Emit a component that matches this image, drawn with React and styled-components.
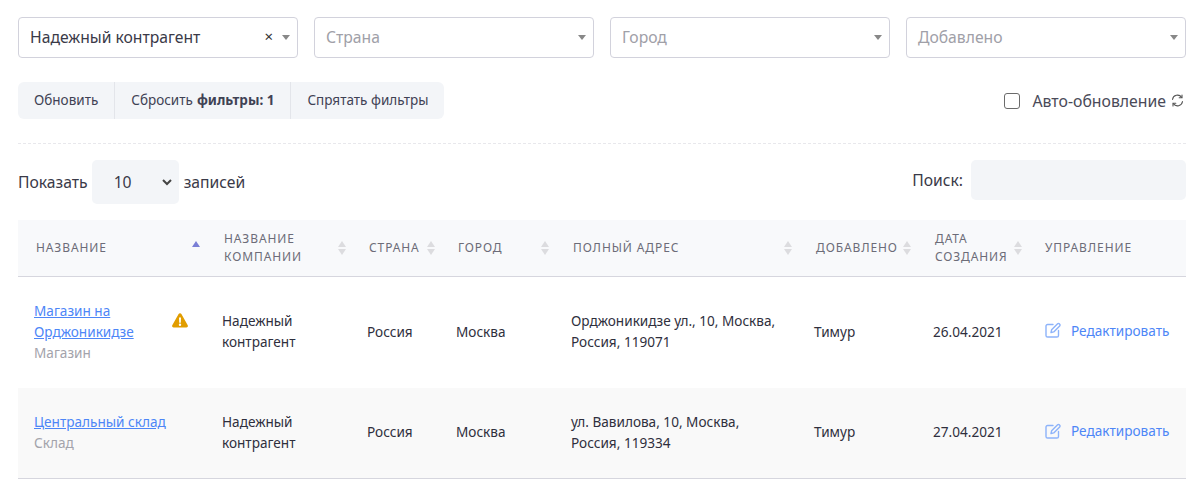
import React from 'react';
import styled, { createGlobalStyle } from 'styled-components';

const Global = createGlobalStyle`
  html, body { margin: 0; padding: 0; background: #fff; }
  body { font-family: "Noto Sans", "Open Sans", sans-serif; color: #2b2b3a; }
`;

const Page = styled.div`
  width: 1199px;
  height: 492px;
  overflow: hidden;
  box-sizing: border-box;
  padding: 17px 13px 0 18px;
`;

const Filters = styled.div`
  display: grid;
  grid-template-columns: repeat(4, 280px);
  column-gap: 16px;
`;

const Select = styled.div`
  height: 41px;
  box-sizing: border-box;
  border: 1px solid #d2d2dc;
  border-radius: 4px;
  display: flex;
  align-items: center;
  padding: 0 7px 2px 11px;
  font-size: 15.7px;
  color: ${p => (p.$filled ? '#3a3a48' : '#a0a0a8')};
`;

const SelectText = styled.span`
  flex: 1;
`;

const Clear = styled.span`
  font-size: 15px;
  font-weight: 400;
  color: #333;
  margin-right: 9px;
  line-height: 1;
`;

const Caret = styled.span`
  width: 0;
  height: 0;
  margin-top: 2px;
  border-left: 4px solid transparent;
  border-right: 4px solid transparent;
  border-top: 5px solid #888;
`;

const ToolRow = styled.div`
  display: flex;
  justify-content: space-between;
  align-items: center;
  margin-top: 24px;
  padding-bottom: 24px;
  border-bottom: 1px dashed #e8e8ec;
`;

const BtnGroup = styled.div`
  display: flex;
  height: 37px;
  background: #f3f5f8;
  border-radius: 6px;
`;

const Btn = styled.div`
  display: flex;
  align-items: center;
  padding: 0 16px 2px;
  font-size: 13.5px;
  color: #3f4254;
  & + & { border-left: 1px solid #e3e5ea; }
  b { font-weight: 700; margin-left: 4px; }
`;

const Auto = styled.label`
  display: flex;
  align-items: center;
  font-size: 15.8px;
  color: #4a4a58;
`;

const Check = styled.span`
  width: 14px;
  height: 14px;
  border: 1px solid #6b6b6b;
  border-radius: 3px;
  margin-right: 13px;
`;

const AutoIcon = styled.svg`
  width: 13px;
  height: 13px;
  margin-left: 5px;
  margin-right: 2px;
`;

const ControlRow = styled.div`
  display: flex;
  justify-content: space-between;
  align-items: flex-start;
  margin-top: 16px;
  height: 60px;
  font-size: 15.7px;
  color: #3a3a48;
`;

const Length = styled.div`
  display: flex;
  align-items: center;
  height: 44px;
`;

const LengthBox = styled.div`
  width: 87px;
  height: 44px;
  margin: 0 5px 0 4px;
  background: #f3f5f8;
  border-radius: 5px;
  box-sizing: border-box;
  padding: 0 7px 0 22px;
  display: flex;
  justify-content: space-between;
  align-items: center;
`;

const Search = styled.div`
  display: flex;
  align-items: center;
  height: 40px;
`;

const SearchBox = styled.div`
  width: 215px;
  height: 40px;
  margin-left: 8px;
  background: #f3f5f8;
  border-radius: 5px;
`;

const Table = styled.table`
  width: 1168px;
  table-layout: fixed;
  border-collapse: collapse;
`;

const Th = styled.th`
  height: 56px;
  box-sizing: border-box;
  background: #f8f9fb;
  border-bottom: 1px solid #d6d6de;
  padding: 0 ${p => (p.$last ? 16 : 18)}px;
  position: relative;
  text-align: left;
  font-size: 12px;
  font-weight: 400;
  line-height: 18px;
  letter-spacing: 0.9px;
  text-transform: uppercase;
  color: #6c6c78;
`;

const SortIcon = styled.span`
  position: absolute;
  right: ${p => p.$right}px;
  top: 50%;
  transform: translateY(-50%);
  display: flex;
  flex-direction: column;
  gap: 2px;
`;

const Up = styled.i`
  display: block;
  width: 0;
  height: 0;
  border-left: 4px solid transparent;
  border-right: 4px solid transparent;
  border-bottom: 6px solid ${p => (p.$on ? '#7a7fd6' : '#dcdcdf')};
`;

const Down = styled.i`
  display: block;
  width: 0;
  height: 0;
  border-left: 4px solid transparent;
  border-right: 4px solid transparent;
  border-top: 6px solid ${p => (p.$hidden ? 'transparent' : '#dcdcdf')};
`;

const Tr = styled.tr`
  height: ${p => p.$h}px;
  background: ${p => (p.$alt ? '#f9f9f9' : '#fff')};
`;

const Td = styled.td`
  padding: 0 16px 2px;
  font-size: 13.6px;
  line-height: 21px;
  color: #2f2f3d;
  border-bottom: ${p => (p.$last ? '1px solid #d6d6de' : 'none')};
`;

const NameCell = styled.div`
  display: flex;
  align-items: center;
  justify-content: space-between;
`;

const NameLink = styled.a`
  color: #4d86f7;
  text-decoration: underline;
  display: block;
`;

const Sub = styled.div`
  color: #a3a3ab;
`;

const Warn = styled.svg`
  width: 16px;
  height: 15px;
  margin-right: 2px;
`;

const Edit = styled.a`
  display: inline-flex;
  align-items: center;
  gap: 10px;
  color: #4d86f7;
  white-space: nowrap;
`;

const EditIcon = styled.svg`
  width: 16px;
  height: 16px;
  color: #8db3fa;
`;

const PencilBox = () => (
  <EditIcon viewBox="0 0 16 16" fill="none" stroke="currentColor" strokeWidth="1.4" strokeLinecap="round" strokeLinejoin="round">
    <path d="M8 2.5H2.6A1.6 1.6 0 0 0 1 4.1v9.3A1.6 1.6 0 0 0 2.6 15h9.3a1.6 1.6 0 0 0 1.6-1.6V8.5" />
    <path d="M6 10.5l.6-2.7 6-6a1.2 1.2 0 0 1 1.7 0l.4.4a1.2 1.2 0 0 1 0 1.7l-6 6z" />
  </EditIcon>
);

const Sort = ({ right, on, single }) => (
  <SortIcon $right={right}>
    <Up $on={on} />
    <Down $hidden={single} />
  </SortIcon>
);

const columns = [
  { w: 188, label: 'Название', right: 6, on: true, single: true },
  { w: 145, label: <>Название<br />компании</>, right: 5 },
  { w: 89, label: 'Страна', right: 5 },
  { w: 115, label: 'Город', right: 6 },
  { w: 243, label: 'Полный адрес', right: 6 },
  { w: 119, label: 'Добавлено', right: 6 },
  { w: 112, label: <>Дата<br />создания</>, right: 7 },
  { w: 157, label: 'Управление' },
];

const rows = [
  { h: 112, name: <>Магазин на<br />Орджоникидзе</>, type: 'Магазин', warn: true, address: <>Орджоникидзе ул., 10, Москва,<br />Россия, 119071</>, date: '26.04.2021' },
  { h: 90, alt: true, last: true, name: 'Центральный склад', type: 'Склад', address: <>ул. Вавилова, 10, Москва,<br />Россия, 119334</>, date: '27.04.2021' },
];

export default function App() {
  return (
    <Page>
      <Global />
      <Filters>
        <Select $filled><SelectText>Надежный контрагент</SelectText><Clear>×</Clear><Caret /></Select>
        <Select><SelectText>Страна</SelectText><Caret /></Select>
        <Select><SelectText>Город</SelectText><Caret /></Select>
        <Select><SelectText>Добавлено</SelectText><Caret /></Select>
      </Filters>
      <ToolRow>
        <BtnGroup>
          <Btn>Обновить</Btn>
          <Btn>Сбросить <b>фильтры: 1</b></Btn>
          <Btn>Спрятать фильтры</Btn>
        </BtnGroup>
        <Auto>
          <Check />
          Авто-обновление
          <AutoIcon viewBox="0 0 13 13" fill="none" stroke="#555" strokeWidth="1.1" strokeLinecap="round">
            <path d="M1.5 5.5A5 5 0 0 1 10.6 3.4" />
            <path d="M11.5 7.5A5 5 0 0 1 2.4 9.6" />
            <path d="M11 1v2.8H8.2" />
            <path d="M2 12V9.2h2.8" />
          </AutoIcon>
        </Auto>
      </ToolRow>
      <ControlRow>
        <Length>
          Показать
          <LengthBox>
            10
            <svg width="10" height="7" viewBox="0 0 10 7" fill="none" stroke="#444" strokeWidth="2"><path d="M1 1l4 4 4-4" /></svg>
          </LengthBox>
          записей
        </Length>
        <Search>
          Поиск:
          <SearchBox />
        </Search>
      </ControlRow>
      <Table>
        <colgroup>
          {columns.map((c, i) => <col key={i} width={c.w} />)}
        </colgroup>
        <thead>
          <tr>
            {columns.map((c, i) => (
              <Th key={i} $last={!c.right}>
                {c.label}
                {c.right && <Sort right={c.right} on={c.on} single={c.single} />}
              </Th>
            ))}
          </tr>
        </thead>
        <tbody>
          {rows.map((r, i) => (
            <Tr key={i} $h={r.h} $alt={r.alt}>
              <Td $last={r.last}>
                <NameCell>
                  <NameLink>{r.name}</NameLink>
                  {r.warn && (
                    <Warn viewBox="0 0 16 15">
                      <path fill="#e19d00" fillRule="evenodd" d="M6.6 1 .4 12a1.6 1.6 0 0 0 1.4 2.5h12.4a1.6 1.6 0 0 0 1.4-2.5L9.4 1a1.6 1.6 0 0 0-2.8 0zM7 4.5h2l-.2 5.2H7.2zM8 10.6a1.2 1.2 0 1 1 0 2.4 1.2 1.2 0 0 1 0-2.4z" />
                    </Warn>
                  )}
                </NameCell>
                <Sub>{r.type}</Sub>
              </Td>
              <Td $last={r.last}>Надежный<br />контрагент</Td>
              <Td $last={r.last}>Россия</Td>
              <Td $last={r.last}>Москва</Td>
              <Td $last={r.last}>{r.address}</Td>
              <Td $last={r.last}>Тимур</Td>
              <Td $last={r.last}>{r.date}</Td>
              <Td $last={r.last}><Edit><PencilBox />Редактировать</Edit></Td>
            </Tr>
          ))}
        </tbody>
      </Table>
    </Page>
  );
}
